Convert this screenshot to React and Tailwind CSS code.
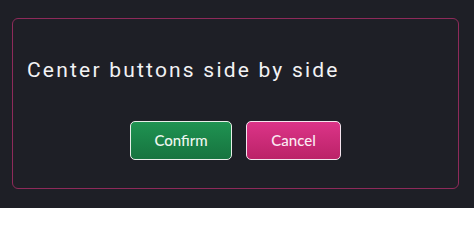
import React from 'react';

// Dialog with two centered buttons
const App = () => {
    return (
        <div className="w-[474px] h-[208px] bg-[#1e1f26] pt-[18px] pl-[12px] overflow-hidden">
            <div className="w-[447px] h-[171px] border-[1.5px] border-[#8e2a5a] rounded-[6px] pt-[36px] pb-[27px] pl-[14px]">
                <h1
                    className="text-[21px] leading-[30px] tracking-[0.105em] text-[#f2f2f4] font-normal"
                    style={{ fontFamily: 'Roboto, "Liberation Sans", sans-serif' }}
                >
                    Center buttons side by side
                </h1>
                <div
                    className="mt-[36px] flex justify-center gap-[14px] -ml-[14px]"
                    style={{ fontFamily: 'Lato, "Open Sans", sans-serif' }}
                >
                    <button className="w-[102px] h-[39px] rounded-[5px] border-[1.5px] border-[#e8efe9] bg-gradient-to-b from-[#1f9352] to-[#17743f] text-[15px] font-medium text-[#eef6ef]">
                        Confirm
                    </button>
                    <button className="w-[95px] h-[39px] rounded-[5px] border-[1.5px] border-[#f4e4ee] bg-gradient-to-b from-[#dc3488] to-[#bb2268] text-[15px] font-medium text-[#fbeaf3]">
                        Cancel
                    </button>
                </div>
            </div>
        </div>
    );
};

export default App;
